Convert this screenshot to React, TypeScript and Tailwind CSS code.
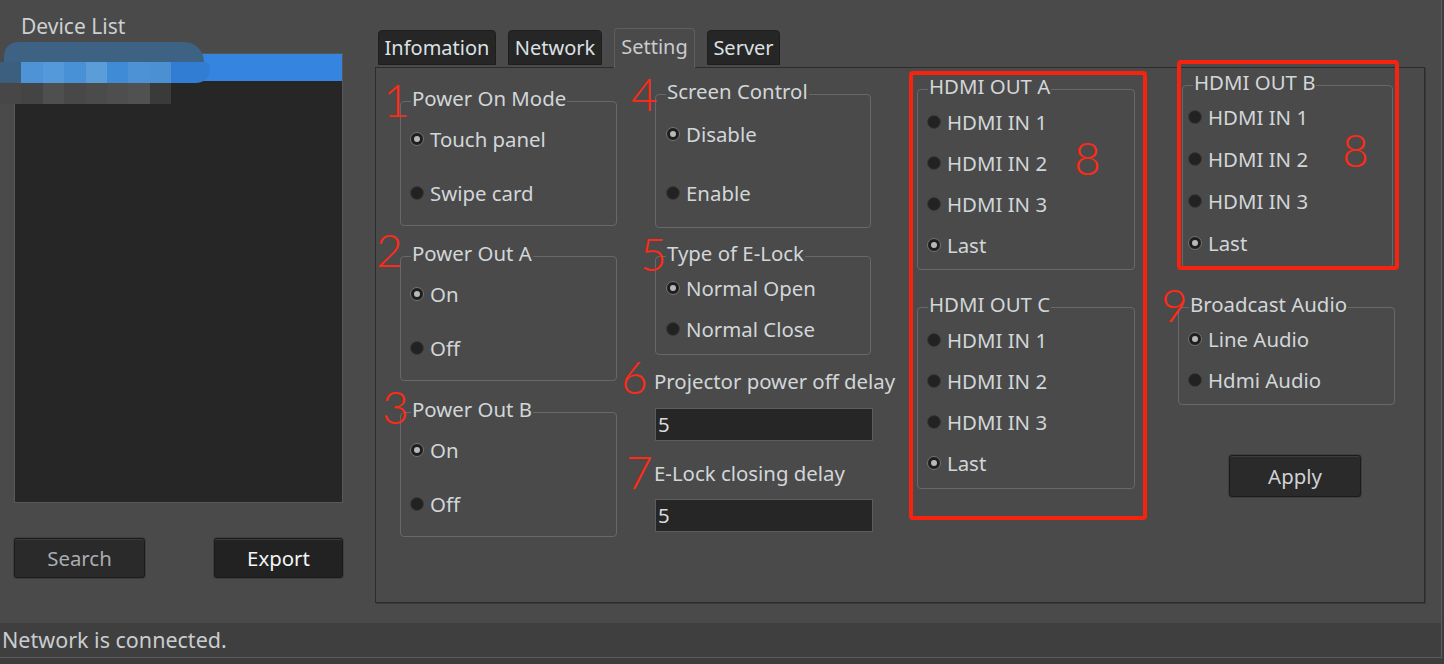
type Option = { label: string; checked?: boolean }

const ui = "font-['Noto_Sans','Open_Sans',sans-serif]"
const textMain = 'whitespace-nowrap text-[20.4px] leading-[24px] text-[#d2d6d9]'

const mosaicBlue = ['#3d5f7f', '#4d93d6', '#5499d9', '#4891d6', '#5a9dd9', '#3f8bd6', '#4c92d5', '#4a90d3']
const mosaicGray = ['#474747', '#444444', '#4f4f4f', '#484848', '#4b4b4b', '#4e4e4e', '#515151', '#3a3a39']

const marks = [
  { n: '1', left: 383, top: 77 },
  { n: '2', left: 376, top: 227 },
  { n: '3', left: 382, top: 384 },
  { n: '4', left: 631, top: 71 },
  { n: '5', left: 640, top: 231 },
  { n: '6', left: 621, top: 354 },
  { n: '7', left: 626, top: 449 },
  { n: '8', left: 1074, top: 135 },
  { n: '8', left: 1342, top: 127 },
  { n: '9', left: 1161, top: 282 },
]

const hdmi = (last = true): Option[] => [
  { label: 'HDMI IN 1' },
  { label: 'HDMI IN 2' },
  { label: 'HDMI IN 3' },
  { label: 'Last', checked: last },
]

function Radio({ checked }: { checked?: boolean }) {
  if (checked) {
    return (
      <span className="flex h-[14px] w-[14px] shrink-0 items-center justify-center rounded-full border-[1.5px] border-[#747474] bg-[#1f1f1f]">
        <span className="h-[6px] w-[6px] rounded-full bg-[#b8b8b8]" />
      </span>
    )
  }
  return <span className="h-[14px] w-[14px] shrink-0 rounded-full border border-[#3a3a3a] bg-[#222222]" />
}

function GroupBox({
  title,
  options,
  className = '',
  inner = '',
}: {
  title: string
  options: Option[]
  className?: string
  inner?: string
}) {
  return (
    <fieldset className={['rounded-[4px] border border-[#686868]', className].join(' ')}>
      <legend className={['ml-[10px] px-px', textMain].join(' ')}>
        <span className="relative -top-[3px]">{title}</span>
      </legend>
      <div className={['flex flex-col', inner].join(' ')}>
        {options.map((o) => (
          <label key={o.label} className={['flex h-[24px] items-center gap-[6px]', textMain].join(' ')}>
            <Radio checked={o.checked} />
            <span>{o.label}</span>
          </label>
        ))}
      </div>
    </fieldset>
  )
}

function DarkButton({ children, className = '' }: { children: React.ReactNode; className?: string }) {
  return (
    <button
      className={[
        'flex items-center justify-center rounded-[3px] border border-[#1b1b1b] bg-[#2a2a2a] text-[20.4px] shadow-[inset_0_1px_0_#3c3c3c,0_0_0_1px_#3e3e3e]',
        className,
      ].join(' ')}
    >
      {children}
    </button>
  )
}

function NumberInput({ className = '' }: { className?: string }) {
  return (
    <div
      className={[
        'flex h-[33px] w-[218px] items-center border border-[#5c5c5c] bg-[#262626] pl-[2px] text-[20.4px] text-[#d8dbdd]',
        className,
      ].join(' ')}
    >
      5
    </div>
  )
}

export default function App() {
  const tabs = ['Infomation', 'Network', 'Setting', 'Server']
  const tabWidths = ['w-[118px]', 'w-[94px]', 'w-[81px]', 'w-[73px]']

  return (
    <div className={['relative h-[664px] w-[1444px] overflow-hidden bg-[#3d3d3d]', ui].join(' ')}>
      <div className="flex h-[658px] w-[1442px] flex-col border-r border-b border-[#5c5c5c] bg-[#4a4a4a]">
        <div className="flex h-[623px]">
          {/* device list */}
          <div className="flex w-[375px] flex-col pl-[14px] pt-[14px]">
            <div className="ml-[7px] text-[21px] leading-[24px] text-[#cdd0d2]">Device List</div>
            <div className="mt-[15px] h-[450px] w-[329px] border border-[#585858] bg-[#262626]">
              <div className="h-[27px] bg-[#3584e0]" />
            </div>
            <div className="mt-[35px] flex">
              <DarkButton className="h-[40px] w-[131px] text-[#a9adb0]">Search</DarkButton>
              <DarkButton className="ml-[69px] h-[40px] w-[129px] bg-[#222222] text-[#f2f4f5]">Export</DarkButton>
            </div>
          </div>

          {/* settings */}
          <div className="flex flex-col pt-[28px]">
            <div className="flex h-[39px] items-end gap-[12px] pl-[3px]">
              {tabs.map((t, i) =>
                t === 'Setting' ? (
                  <div
                    key={t}
                    className={[
                      'relative z-10 -mb-px flex h-[40px] items-center justify-center rounded-t-[4px] border border-b-0 border-[#5f5f5f] bg-[#4a4a4a] pb-[4px] text-[20px] text-[#c9cccf]',
                      tabWidths[i],
                    ].join(' ')}
                  >
                    {t}
                  </div>
                ) : (
                  <div
                    key={t}
                    className={[
                      'mb-[2px] flex h-[35px] items-center justify-center rounded-t-[4px] border border-[#1e1e1e] bg-[#262626] text-[20px] text-[#dde1e3]',
                      tabWidths[i],
                    ].join(' ')}
                  >
                    {t}
                  </div>
                ),
              )}
            </div>

            <div className="flex h-[536px] w-[1050px] items-start border border-[#2c2c2c] bg-[#4a4a4a] pl-[24px] shadow-[1px_1px_0_#3a3a3a]">
              {/* column 1 */}
              <div className="flex w-[217px] flex-col">
                <GroupBox
                  title="Power On Mode"
                  className="mt-[21px]"
                  inner="gap-[30px] pt-[14px] pb-[20px] pl-[9px]"
                  options={[{ label: 'Touch panel', checked: true }, { label: 'Swipe card' }]}
                />
                <GroupBox
                  title="Power Out A"
                  className="mt-[18px]"
                  inner="gap-[30px] pt-[14px] pb-[20px] pl-[9px]"
                  options={[{ label: 'On', checked: true }, { label: 'Off' }]}
                />
                <GroupBox
                  title="Power Out B"
                  className="mt-[19px]"
                  inner="gap-[30px] pt-[14px] pb-[20px] pl-[9px]"
                  options={[{ label: 'On', checked: true }, { label: 'Off' }]}
                />
              </div>

              {/* column 2 */}
              <div className="ml-[38px] flex w-[218px] flex-col">
                <GroupBox
                  title="Screen Control"
                  className="mt-[14px] w-[216px]"
                  inner="gap-[35px] pt-[16px] pb-[22px] pl-[10px]"
                  options={[{ label: 'Disable', checked: true }, { label: 'Enable' }]}
                />
                <GroupBox
                  title="Type of E-Lock"
                  className="mt-[16px] w-[216px]"
                  inner="gap-[17px] pt-[8px] pb-[13px] pl-[10px]"
                  options={[{ label: 'Normal Open', checked: true }, { label: 'Normal Close' }]}
                />
                <div className={['mt-[14px] -ml-px', textMain].join(' ')}>Projector power off delay</div>
                <NumberInput className="mt-[15px]" />
                <div className={['mt-[20px] -ml-px', textMain].join(' ')}>E-Lock closing delay</div>
                <NumberInput className="mt-[14px]" />
              </div>

              {/* column 3 */}
              <div className="ml-[44px] flex w-[218px] flex-col">
                <GroupBox title="HDMI OUT A" className="mt-[9px]" inner="gap-[17px] pt-[9px] pb-[12px] pl-[9px]" options={hdmi()} />
                <GroupBox title="HDMI OUT C" className="mt-[25px]" inner="gap-[17px] pt-[9px] pb-[13px] pl-[9px]" options={hdmi()} />
              </div>

              {/* column 4 */}
              <div className="ml-[43px] flex w-[217px] flex-col">
                <GroupBox
                  title="HDMI OUT B"
                  className="mt-[5px] ml-[4px] w-[211px]"
                  inner="gap-[18px] pt-[8px] pb-[12px] pl-[5px]"
                  options={hdmi()}
                />
                <GroupBox
                  title="Broadcast Audio"
                  className="mt-[27px]"
                  inner="gap-[17px] pt-[8px] pb-[12px] pl-[9px]"
                  options={[{ label: 'Line Audio', checked: true }, { label: 'Hdmi Audio' }]}
                />
                <DarkButton className="mt-[50px] ml-[51px] h-[42px] w-[132px] text-[#cfd3d6]">Apply</DarkButton>
              </div>
            </div>
          </div>
        </div>

        <div className="flex h-[34px] items-center bg-[#3f3f3f] pl-[2px] text-[21.5px] text-[#c9cdd0]">Network is connected.</div>
      </div>

      {/* pixelated redaction over the first list row */}
      <div className="pointer-events-none absolute left-0 top-[42px] flex w-[212px] flex-col">
        <div className="ml-[4px] h-[20px] w-[200px] rounded-tl-[18px] rounded-tr-[26px] bg-[#3e6283]" />
        <div className="flex h-[21px]">
          {mosaicBlue.map((c, i) => (
            <div key={i} className="h-full w-[21.4px]" style={{ background: c }} />
          ))}
          <div className="h-full w-[39px] rounded-br-[14px] rounded-tr-[6px] bg-[#317dd3]" />
        </div>
        <div className="flex h-[21px]">
          {mosaicGray.map((c, i) => (
            <div key={i} className="h-full w-[21.4px]" style={{ background: c }} />
          ))}
        </div>
      </div>

      {/* red annotations */}
      <div className="pointer-events-none absolute left-[909px] top-[71px] h-[449px] w-[238px] rounded-[4px] border-[4px] border-[#f8230f]" />
      <div className="pointer-events-none absolute left-[1177px] top-[60px] h-[210px] w-[222px] rounded-[4px] border-[4px] border-[#f8230f]" />
      {marks.map((m, i) => (
        <div
          key={i}
          className="pointer-events-none absolute font-['Lato',sans-serif] text-[46px] font-light leading-none text-[#ff2a17]"
          style={{ left: m.left, top: m.top }}
        >
          {m.n}
        </div>
      ))}
    </div>
  )
}
